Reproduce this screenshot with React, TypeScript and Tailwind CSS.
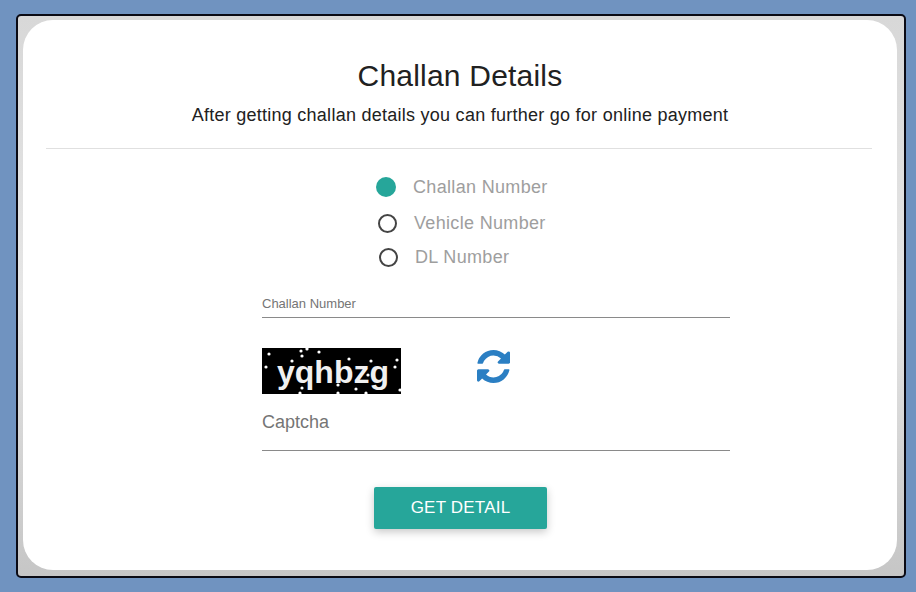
const dots: [number, number][] = [
  [7, 6], [39, 3], [45, 1], [40, 8], [57, 4], [30, 13], [4, 19], [87, 11], [109, 13], [135, 12], [133, 19], [40, 40], [38, 45], [76, 45], [94, 41], [104, 45], [138, 42], [76, 37], [106, 27], [85, 20],
];

function Radio({ checked, label, left, gap, mb }: { checked?: boolean; label: string; left: string; gap: string; mb: string }) {
  return (
    <div className={`flex items-center ${left} ${gap} ${mb}`}>
      {checked ? (
        <span className="block h-5 w-5 rounded-full bg-[#26a69a]" />
      ) : (
        <span className="block h-[19px] w-[19px] rounded-full border-2 border-[#444444]" />
      )}
      <span className="text-[18px] leading-[22px] tracking-[0.33px] text-[#9e9e9e]">{label}</span>
    </div>
  );
}

export default function App() {
  return (
    <div className="h-[592px] w-[916px] overflow-hidden bg-[#7093c0] pl-4 pt-[14px] font-['Liberation_Sans',Arial,sans-serif]">
      <div className="h-[564px] w-[890px] rounded-[5px] border-2 border-[#0a0a14] bg-gradient-to-b from-[#d8d8d8] via-[#e6e6e6] to-[#c6c6c6] pb-[5px] pl-[5px] pr-[6px] pt-[4px]">
        <div className="flex h-[550px] w-[874px] flex-col rounded-[30px] bg-white pt-[38px]">
          <h1 className="text-center text-[30px] font-normal leading-[36px] tracking-[0.2px] text-[#212121]">Challan Details</h1>
          <p className="mt-[10px] text-center text-[18px] leading-[22px] tracking-[0.26px] text-[#212121]">
            After getting challan details you can further go for online payment
          </p>
          <div className="ml-[23px] mr-[25px] mt-[22px] h-px bg-[#e0e0e0]" />
          <div className="mt-[27px] flex flex-col pl-[353px]">
            <Radio checked label="Challan Number" left="pl-0" gap="gap-[17px]" mb="mb-[14px]" />
            <Radio label="Vehicle Number" left="pl-[2px]" gap="gap-[17px]" mb="mb-[12px]" />
            <Radio label="DL Number" left="pl-[3px]" gap="gap-[17px]" mb="mb-0" />
          </div>
          <div className="ml-[239px] mt-[26px] w-[468px]">
            <div className="h-[24px] border-b border-[#8a8a8a] text-[13px] leading-[20px] text-[#757575]">Challan Number</div>
            <div className="mt-[30px] flex items-start">
              <div className="relative flex h-[46px] w-[139px] items-center justify-center overflow-hidden bg-black pl-[3px]">
                <span className="pt-[2px] text-[32px] font-bold leading-none text-[#f0f0f0]">yqhbzg</span>
                <svg className="absolute inset-0" width="139" height="46" viewBox="0 0 139 46">
                  {dots.map(([x, y], i) => (
                    <circle key={i} cx={x} cy={y} r="1.6" fill="#fff" />
                  ))}
                </svg>
              </div>
              <svg className="ml-[76px] mt-[2px] h-[33px] w-[33px] fill-[#2b7fc3]" viewBox="0 0 1536 1536">
                <path d="M1511 928q0 5-1 7-64 268-268 434.5t-478 166.5q-146 0-282.5-55t-243.5-157l-129 129q-19 19-45 19t-45-19-19-45v-448q0-26 19-45t45-19h448q26 0 45 19t19 45-19 45l-137 137q71 66 161 102t187 36q134 0 250-65t186-179q11-17 53-117 8-23 30-23h192q13 0 22.5 9.5t9.5 22.5zm25-800v448q0 26-19 45t-45 19h-448q-26 0-45-19t-19-45 19-45l138-138q-148-137-349-137-134 0-250 65t-186 179q-11 17-53 117-8 23-30 23h-199q-13 0-22.5-9.5t-9.5-22.5v-7q65-268 270-434.5t480-166.5q146 0 284 55.5t245 156.5l130-129q19-19 45-19t45 19 19 45z" />
              </svg>
            </div>
            <div className="mt-[17px] h-[40px] border-b border-[#8a8a8a] text-[18px] leading-[22px] text-[#757575]">Captcha</div>
          </div>
          <button className="ml-[351px] mt-[36px] h-[42px] w-[173px] rounded-[2px] bg-[#26a69a] text-[17px] tracking-[0.2px] text-white shadow-[0_3px_8px_rgba(0,0,0,0.22)]">
            GET DETAIL
          </button>
        </div>
      </div>
    </div>
  );
}
